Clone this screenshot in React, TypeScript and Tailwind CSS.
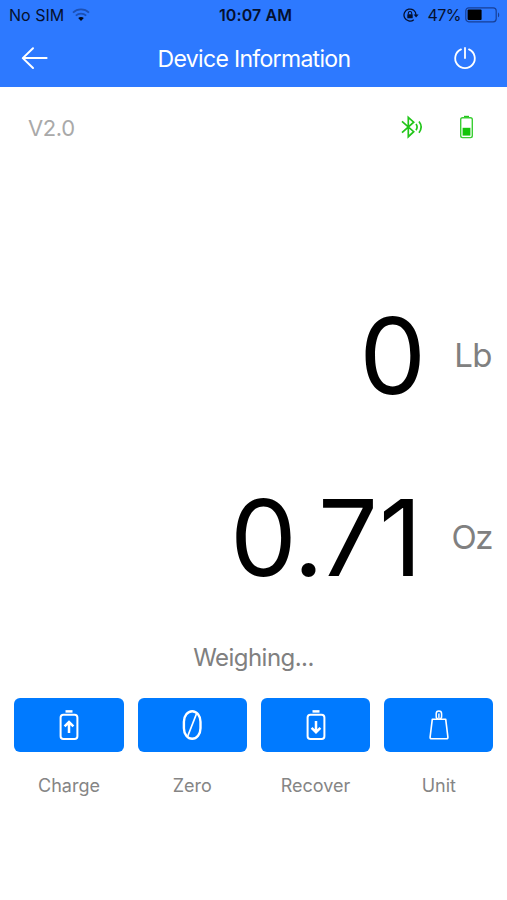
import type { ReactNode } from "react";

function StatusBar() {
  return (
    <div className="grid h-[30px] grid-cols-3 items-center pl-[9px] pr-[6px] text-[#05102e]">
      <div className="flex items-center gap-[8px]">
        <span className="text-[16px] leading-[30px]">No SIM</span>
        <svg className="h-[14px] w-[18px]" viewBox="0 0 18 14" fill="none">
          <path d="M1 4.6C5.4.4 12.6.4 17 4.6" stroke="#1c50b4" strokeWidth="1.8" />
          <path d="M3.8 7.6c3-2.7 7.4-2.7 10.4 0" stroke="#1c50b4" strokeWidth="1.8" />
          <path d="M6.2 10.1c1.6-1.5 4-1.5 5.6 0L9 13z" fill="#020818" />
        </svg>
      </div>
      <span className="pl-[1px] text-center text-[16px] leading-[30px] font-semibold tracking-[0.1px] whitespace-nowrap">10:07 AM</span>
      <div className="flex items-center justify-end">
        <svg className="mr-[8px] h-[14px] w-[16px]" viewBox="0 0 16 14" fill="none">
          <path d="M10.8 11.7A6 6 0 1 1 13 7" stroke="#05102e" strokeWidth="1.3" />
          <path d="M10.6 6.6h5L13.1 9.6z" fill="#05102e" />
          <rect x="4.3" y="6.2" width="5.4" height="4" rx=".5" fill="#05102e" />
          <path d="M5.3 6.5V5.2a1.7 1.7 0 0 1 3.4 0v1.3" stroke="#05102e" strokeWidth="1.1" />
        </svg>
        <span className="mr-[4px] text-[16px] leading-[30px] tracking-[-0.5px]">47%</span>
        <svg className="h-[16px] w-[36px]" viewBox="0 0 36 16" fill="none">
          <rect x=".8" y=".8" width="30.4" height="14" rx="3" stroke="#173f96" strokeWidth="1.2" />
          <rect x="2.6" y="2.6" width="14" height="10.4" rx="1" fill="#000" />
          <path d="M33 5.5c1.6.6 1.6 4.2 0 4.8z" fill="#173f96" />
        </svg>
      </div>
    </div>
  );
}

function NavBar() {
  return (
    <div className="flex h-[57px] items-center justify-between pr-[30px] pl-[21px] text-white">
      <svg className="mb-[2px] h-[24px] w-[27px]" viewBox="0 0 27 24" fill="none" stroke="currentColor" strokeWidth="2" strokeLinecap="round" strokeLinejoin="round">
        <path d="M12 2.2 1.8 12.1l10.2 9.9M2 12.1h23.6" />
      </svg>
      <h1 className="pl-[7px] text-[23px] leading-[30px] tracking-[-0.68px] whitespace-nowrap">Device Information</h1>
      <svg className="mb-[2px] h-[24px] w-[24px]" viewBox="0 0 24 24" fill="none" stroke="currentColor" strokeWidth="1.8" strokeLinecap="round">
        <path d="M8 3.4a9.8 9.8 0 1 0 8 0M12 2v10" />
      </svg>
    </div>
  );
}

function BatteryIcon({ children }: { children: ReactNode }) {
  return (
    <svg className="h-[32px] w-[20px]" viewBox="0 0 20 32" fill="none" stroke="white" strokeWidth="2">
      <path d="M6.5 2.4h7" strokeWidth="2.5" />
      <rect x="1.6" y="5.8" width="16.8" height="24.2" rx="2.8" />
      {children}
    </svg>
  );
}

const actions: { label: string; icon: ReactNode }[] = [
  {
    label: "Charge",
    icon: (
      <BatteryIcon>
        <path d="M10 24V13.2M5.6 17.4 10 13l4.4 4.4" strokeWidth="2.5" />
      </BatteryIcon>
    ),
  },
  {
    label: "Zero",
    icon: (
      <svg className="h-[32px] w-[20px]" viewBox="0 0 20 32" fill="none" stroke="white">
        <rect x="1.9" y="2.2" width="16.6" height="27.6" rx="8.3" ry="10.5" strokeWidth="2.4" />
        <path d="M14.4 5 5.8 27" strokeWidth="1.7" />
      </svg>
    ),
  },
  {
    label: "Recover",
    icon: (
      <BatteryIcon>
        <path d="M10 12v11M5.6 18.8l4.4 4.4 4.4-4.4" strokeWidth="2.5" />
      </BatteryIcon>
    ),
  },
  {
    label: "Unit",
    icon: (
      <svg className="h-[32px] w-[20px]" viewBox="0 0 20 32" fill="none" stroke="white" strokeWidth="1.6" strokeLinejoin="round">
        <path d="M3.3 10.2h13.4l2.2 18q.1 1.6-1.4 1.6h-15q-1.5 0-1.4-1.6z" />
        <rect x="7.2" y="2" width="5.4" height="8.2" rx="2.7" strokeWidth="1.5" />
        <path d="M9.9 4.5v4.5" strokeWidth="1.4" />
      </svg>
    ),
  },
];

function Reading({ value, unit }: { value: ReactNode; unit: ReactNode }) {
  return (
    <div className="flex h-[182px] items-center justify-end">
      <span className="pt-[2px] text-[106px] leading-[182px] text-black">{value}</span>
      <span className="w-[81px] pr-[15px] text-right text-[33px] leading-[182px] text-[#808080]">{unit}</span>
    </div>
  );
}

export default function App() {
  return (
    <div className="flex h-[900px] w-[507px] flex-col overflow-hidden bg-white font-['Inter',sans-serif]">
      <header className="h-[87px] bg-[#2d79ff]">
        <StatusBar />
        <NavBar />
      </header>
      <div className="flex h-[82px] items-center justify-between pr-[33px] pl-[28px]">
        <span className="text-[22px] tracking-[-0.4px] text-[#a9a9a9]">V2.0</span>
        <div className="flex items-center gap-[36px] pb-[2px]">
          <svg className="h-[24px] w-[22px]" viewBox="0 0 22 24" fill="none" stroke="#22c51a" strokeWidth="1.7">
            <path d="m1 6.3 11.7 10.4-5.4 5V2.3l5.4 4.9L1 17.6" />
            <path d="M15 9q2.2 3 0 6.2M18 6.5q4.3 5.5 0 11.2" />
          </svg>
          <svg className="h-[24px] w-[15px]" viewBox="0 0 15 24" fill="none">
            <path d="M5 1.6h5" stroke="#22c51a" strokeWidth="1.6" />
            <rect x="1.7" y="2.8" width="11.6" height="19.8" rx="1.8" stroke="#3bcf34" strokeWidth="1.4" />
            <rect x="3.6" y="12.8" width="7.8" height="7.8" fill="#14c40a" />
          </svg>
        </div>
      </div>
      <main className="flex h-[503px] flex-col pt-[95px]">
        <Reading value="0" unit={<span className="tracking-[-0.5px]">Lb</span>} />
        <Reading
          value={
            <>
              <span className="tracking-[-3.5px]">0</span>
              <span className="tracking-[-6px]">.</span>
              <span className="tracking-[1px]">7</span>
              <span className="tracking-[4px]">1</span>
            </>
          }
          unit={<span className="tracking-[-1.5px]">Oz</span>}
        />
        <p className="pt-[15px] text-center text-[24px] leading-[30px] tracking-[-0.55px] text-[#808080]">Weighing...</p>
      </main>
      <div className="grid grid-cols-4 gap-[14px] pt-[26px] pr-[13.6px] pl-[14.4px]">
        {actions.map((a) => (
          <div key={a.label} className="flex flex-col items-center">
            <button className="flex h-[54px] w-full items-center justify-center rounded-[6px] bg-[#007aff]">{a.icon}</button>
            <span className="pt-[22px] text-[18px] leading-[24px] text-[#858585]">{a.label}</span>
          </div>
        ))}
      </div>
    </div>
  );
}
